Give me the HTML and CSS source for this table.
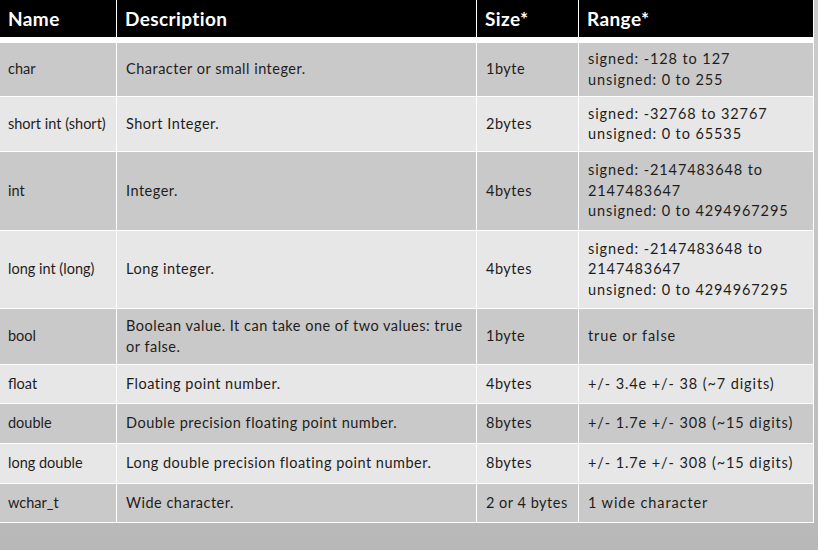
FILE: index.html
```html
<!DOCTYPE html>
<html>
<head>
<meta charset="utf-8">
<link rel="stylesheet" href="styles.css">
</head>
<body>
<div class="page">
  <div class="table">
    <div class="cell head">Name</div>
    <div class="cell head">Description</div>
    <div class="cell head">Size*</div>
    <div class="cell head">Range*</div>
    <div class="rule"></div>

    <div class="cell dark name">char</div>
    <div class="cell dark">Character or small integer.</div>
    <div class="cell dark">1byte</div>
    <div class="cell dark range">signed: -128 to 127<br>unsigned: 0 to 255</div>

    <div class="cell light name">short int (short)</div>
    <div class="cell light">Short Integer.</div>
    <div class="cell light">2bytes</div>
    <div class="cell light range">signed: -32768 to 32767<br>unsigned: 0 to 65535</div>

    <div class="cell dark name">int</div>
    <div class="cell dark">Integer.</div>
    <div class="cell dark">4bytes</div>
    <div class="cell dark range">signed: -2147483648 to<br>2147483647<br>unsigned: 0 to 4294967295</div>

    <div class="cell light name">long int (long)</div>
    <div class="cell light">Long integer.</div>
    <div class="cell light">4bytes</div>
    <div class="cell light range">signed: -2147483648 to<br>2147483647<br>unsigned: 0 to 4294967295</div>

    <div class="cell dark name">bool</div>
    <div class="cell dark">Boolean value. It can take one of two values: true<br>or false.</div>
    <div class="cell dark">1byte</div>
    <div class="cell dark range">true or false</div>

    <div class="cell light name">float</div>
    <div class="cell light">Floating point number.</div>
    <div class="cell light">4bytes</div>
    <div class="cell light range">+/- 3.4e +/- 38 (~7 digits)</div>

    <div class="cell dark name">double</div>
    <div class="cell dark">Double precision floating point number.</div>
    <div class="cell dark">8bytes</div>
    <div class="cell dark range">+/- 1.7e +/- 308 (~15 digits)</div>

    <div class="cell light name">long double</div>
    <div class="cell light">Long double precision floating point number.</div>
    <div class="cell light">8bytes</div>
    <div class="cell light range">+/- 1.7e +/- 308 (~15 digits)</div>

    <div class="cell dark name">wchar_t</div>
    <div class="cell dark">Wide character.</div>
    <div class="cell dark">2 or 4 bytes</div>
    <div class="cell dark range">1 wide character</div>
  </div>
</div>
</body>
</html>
```

FILE: styles.css
```css
html, body {
  margin: 0;
  padding: 0;
}
body {
  width: 818px;
  height: 550px;
  overflow: hidden;
  background: linear-gradient(180deg, #cbcbcb 0%, #c2c2c2 60%, #b8b8b8 100%);
  font-family: "Lato", "DejaVu Sans", sans-serif;
}
.page {
  display: flex;
  align-items: flex-start;
}
.table {
  display: grid;
  grid-template-columns: 116px 359px 101px 234px;
  grid-template-rows: 37px 4px 53px 54px 78px 77px 55px 38px 39px 39px 38px;
  column-gap: 1px;
  row-gap: 1px;
  background: #ffffff;
  padding: 0 1px 1px 0;
}
.rule {
  grid-column: 1 / -1;
  background: #ffffff;
}
.cell {
  display: flex;
  align-items: center;
  padding: 0 9px;
  font-size: 14.5px;
  letter-spacing: 0.5px;
  line-height: 20.5px;
  color: #1f1d1c;
  white-space: nowrap;
}
.cell.name {
  padding-left: 8px;
  letter-spacing: 0;
}
.cell.range {
  letter-spacing: 0.9px;
}
.cell.head {
  background: #000000;
  color: #ffffff;
  font-weight: 700;
  font-size: 19px;
  letter-spacing: 0.4px;
  padding-left: 8px;
  padding-top: 2px;
}
.cell.dark {
  background: #c9c9c9;
}
.cell.light {
  background: #e7e7e7;
}
```
